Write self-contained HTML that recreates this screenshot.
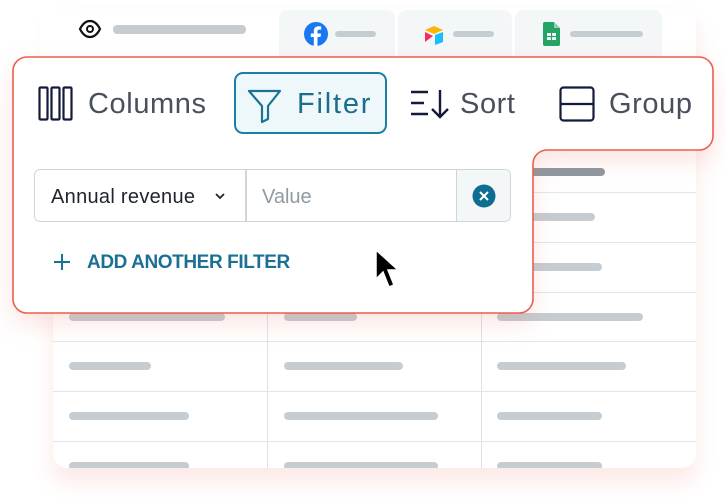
<!DOCTYPE html>
<html><head><meta charset="utf-8"><style>
*{margin:0;padding:0;box-sizing:border-box}
body{width:725px;height:498px;background:#fff;position:relative;overflow:hidden;font-family:"Liberation Sans",sans-serif}
.abs{position:absolute}
.bar{position:absolute;height:8px;border-radius:4px;background:#c5cdd2}
.card{left:53px;top:10px;width:643px;height:458px;border-radius:0 0 14px 14px;background:#fff;box-shadow:0 14px 22px rgba(232,96,76,0.14);overflow:hidden}
.tab{top:10px;height:50px;background:#f4f7f8;border-radius:8px 8px 0 0}
.hl{position:absolute;left:53px;width:643px;height:1px;background:#e2e6e8}
.vl{position:absolute;top:150px;width:1px;height:318px;background:#dde2e5}
.txt{position:absolute;font-size:29px;color:#4a4f5c;top:87px;line-height:34px;letter-spacing:0.6px}
</style></head><body>
<div class="abs card">
<div class="hl" style="left:0;top:182px"></div><div class="hl" style="left:0;top:232px"></div><div class="hl" style="left:0;top:282px"></div><div class="hl" style="left:0;top:331px"></div><div class="hl" style="left:0;top:381px"></div><div class="hl" style="left:0;top:431px"></div>
<div class="vl" style="left:214px;top:140px"></div><div class="vl" style="left:428px;top:140px"></div>
<div class="bar" style="left:452px;top:158px;width:100px;background:#8e99a1"></div>
<div class="bar" style="left:444px;top:203px;width:98px"></div>
<div class="bar" style="left:444px;top:253px;width:105px"></div>
<div class="bar" style="left:16px;top:303px;width:156px"></div><div class="bar" style="left:231px;top:303px;width:73px"></div><div class="bar" style="left:444px;top:303px;width:146px"></div>
<div class="bar" style="left:16px;top:352px;width:82px"></div><div class="bar" style="left:231px;top:352px;width:119px"></div><div class="bar" style="left:444px;top:352px;width:129px"></div>
<div class="bar" style="left:16px;top:402px;width:120px"></div><div class="bar" style="left:231px;top:402px;width:154px"></div><div class="bar" style="left:444px;top:402px;width:105px"></div>
<div class="bar" style="left:16px;top:452px;width:120px"></div><div class="bar" style="left:231px;top:452px;width:154px"></div><div class="bar" style="left:444px;top:452px;width:105px"></div>
</div>
<div class="abs tab" style="left:279px;width:116px"></div>
<div class="abs tab" style="left:398px;width:114px"></div>
<div class="abs tab" style="left:515px;width:147px"></div>
<div class="abs" style="left:40px;top:10px;width:236px;height:50px;background:#fff"></div>
<svg class="abs" style="left:78px;top:19px" width="24" height="20" viewBox="0 0 24 20"><path d="M2 10C5 4 9 2 12 2s7 2 10 8c-3 6-7 8-10 8s-7-2-10-8z" fill="none" stroke="#111" stroke-width="2.2"/><circle cx="12" cy="10" r="3" fill="none" stroke="#111" stroke-width="2"/></svg>
<div class="bar" style="left:113px;top:25px;width:133px;height:9px;background:#c5cdd2"></div>
<svg class="abs" style="left:304px;top:22px" width="24" height="24" viewBox="0 0 24 24"><circle cx="12" cy="12" r="12" fill="#1877f2"/><path d="M13.5 24V15h3l.5-3.5h-3.5V9.3c0-1 .3-1.7 1.8-1.7h1.9V4.5c-.3 0-1.5-.2-2.8-.2-2.8 0-4.6 1.7-4.6 4.8v2.4H6.8V15H9.8v9z" fill="#fff"/></svg>
<div class="bar" style="left:335px;top:31px;width:41px;height:6px"></div>
<svg class="abs" style="left:423px;top:24px" width="22" height="22" viewBox="0 0 22 22"><path d="M2 6l9-4 9 4-9 4z" fill="#fcb400"/><path d="M12 11l8-3v10l-8 3z" fill="#18bfff"/><path d="M2 8l8 4-8 6z" fill="#f82b60"/></svg>
<div class="bar" style="left:453px;top:31px;width:41px;height:6px"></div>
<svg class="abs" style="left:543px;top:22px" width="17" height="24" viewBox="0 0 17 24"><path d="M0 2a2 2 0 0 1 2-2h9l6 6v16a2 2 0 0 1-2 2H2a2 2 0 0 1-2-2z" fill="#23a566"/><path d="M11 0v6h6z" fill="#8ed1b1"/><rect x="4" y="11" width="9" height="7" fill="#fff"/><path d="M4 14.5h9M8.5 11v7" stroke="#23a566" stroke-width="1.2"/></svg>
<div class="bar" style="left:570px;top:31px;width:73px;height:6px"></div>

<svg class="abs" style="left:0;top:0;filter:drop-shadow(0 10px 12px rgba(232,96,76,0.17))" width="725" height="340">
<path d="M27 57H699A14 14 0 0 1 713 71V136A14 14 0 0 1 699 150H547A14 14 0 0 0 533 164V299A14 14 0 0 1 519 313H27A14 14 0 0 1 13 299V71A14 14 0 0 1 27 57Z" fill="#fff" stroke="#e8604c" stroke-width="1.6"/>
</svg>

<svg class="abs" style="left:38px;top:86px" width="36" height="36" viewBox="0 0 36 36"><g fill="none" stroke="#141b3a" stroke-width="2.2"><rect x="1.5" y="1.5" width="8" height="32" rx="1"/><rect x="13.5" y="1.5" width="8" height="32" rx="1"/><rect x="25.5" y="1.5" width="8" height="32" rx="1"/></g></svg>
<div class="txt" style="left:88px">Columns</div>
<div class="abs" style="left:234px;top:72px;width:153px;height:62px;background:#eef8fb;border:2px solid #1a7fa0;border-radius:9px"></div>
<svg class="abs" style="left:247px;top:88px" width="36" height="36" viewBox="0 0 36 36"><path d="M2 3H33L21 18V31L15 34V18Z" fill="none" stroke="#1b7194" stroke-width="2.2" stroke-linejoin="round"/></svg>
<div class="txt" style="left:297px;color:#1b6f8d;letter-spacing:1.8px">Filter</div>
<svg class="abs" style="left:410px;top:88px" width="40" height="32" viewBox="0 0 40 32"><g stroke="#141b3a" stroke-width="2.4" fill="none"><path d="M1 4H18M1 15H14M1 26H18M30 2V29M22 21L30 29L38 21"/></g></svg>
<div class="txt" style="left:460px">Sort</div>
<svg class="abs" style="left:559px;top:86px" width="36" height="36" viewBox="0 0 36 36"><g fill="none" stroke="#141b3a" stroke-width="2.2"><rect x="1.5" y="1.5" width="33" height="33" rx="3"/><path d="M1.5 18H34.5"/></g></svg>
<div class="txt" style="left:609px">Group</div>

<div class="abs" style="left:34px;top:169px;width:477px;height:53px;border:1.5px solid #cfd6da;border-radius:6px;overflow:hidden">
<div class="abs" style="left:421px;top:0;width:56px;height:53px;background:#f4f7f8;border-left:1.5px solid #cfd6da"></div>
<div class="abs" style="left:210px;top:0;width:1.5px;height:53px;background:#cfd6da"></div>
</div>
<div class="abs" style="left:51px;top:186px;font-size:20px;color:#1f2330;letter-spacing:0.3px">Annual revenue</div>
<svg class="abs" style="left:214px;top:192px" width="12" height="8" viewBox="0 0 12 8"><path d="M2 2L6 6L10 2" fill="none" stroke="#1f2330" stroke-width="1.8"/></svg>
<div class="abs" style="left:262px;top:186px;font-size:20px;color:#8f9aa2">Value</div>
<svg class="abs" style="left:472px;top:184px" width="24" height="24" viewBox="0 0 24 24"><circle cx="12" cy="12" r="11.5" fill="#0d6e91"/><path d="M8 8L16 16M16 8L8 16" stroke="#fff" stroke-width="2"/></svg>
<svg class="abs" style="left:53px;top:253px" width="18" height="18" viewBox="0 0 18 18"><path d="M9 1V17M1 9H17" stroke="#1b7194" stroke-width="2"/></svg>
<div class="abs" style="left:87px;top:252px;font-size:19px;font-weight:bold;color:#1b7194;white-space:nowrap;letter-spacing:-0.4px">ADD ANOTHER FILTER</div>
<svg class="abs" style="left:374px;top:248px" width="28" height="42" viewBox="0 0 28 42"><path d="M2 2V31L9 24L15 39L20 37L14 22H24Z" fill="#000" stroke="#fff" stroke-width="1.5"/></svg>
</body></html>
